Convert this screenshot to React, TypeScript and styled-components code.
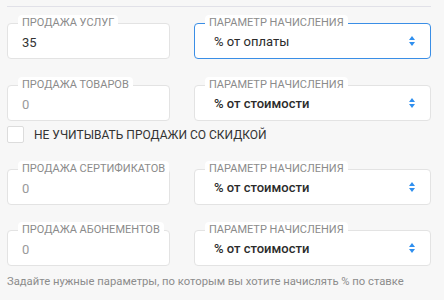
import React from "react";
import styled, { createGlobalStyle } from "styled-components";

const Global = createGlobalStyle`
  html, body { margin: 0; padding: 0; background: #f7f7f7; }
  body { font-family: Roboto, "Noto Sans", Arial, sans-serif; }
  * { box-sizing: border-box; }
`;

const Page = styled.div`
  width: 444px;
  height: 300px;
  padding: 6px 13px 0 7px;
  background: #f7f7f7;
`;

const Divider = styled.div`
  height: 1px;
  background: #e1e1e8;
`;

const Row = styled.div<{ $mt: number }>`
  display: grid;
  grid-template-columns: 163px 237px;
  column-gap: 24px;
  margin-top: ${(p) => p.$mt}px;
`;

const Field = styled.div<{ $focused?: boolean }>`
  position: relative;
  height: 36px;
  background: #fff;
  border: 1px solid ${(p) => (p.$focused ? "#3a8ee6" : "#e3e3e3")};
  border-radius: 4px;
  display: flex;
  align-items: center;
`;

const Label = styled.span`
  position: absolute;
  left: 10px;
  top: -9px;
  padding: 1px 4px 1px;
  background: #fff;
  border-radius: 4px;
  font-size: 11px;
  line-height: 14px;
  color: #8b8b8b;
  white-space: nowrap;
`;

const Value = styled.span<{ $muted?: boolean }>`
  padding-left: 14px;
  padding-top: 2px;
  font-size: 13px;
  color: ${(p) => (p.$muted ? "#9a9a9a" : "#333")};
`;

const SelectValue = styled.span<{ $bold?: boolean }>`
  flex: 1;
  padding-left: 19px;
  padding-top: 1px;
  font-size: 13px;
  font-weight: ${(p) => (p.$bold ? 500 : 400)};
  color: #2b2b2b;
`;

const Arrows = styled.svg`
  margin-right: 15px;
  flex: none;
`;

const CheckRow = styled.label`
  display: flex;
  align-items: center;
  gap: 10px;
  margin-top: 5px;
  font-size: 12px;
  color: #333;
`;

const Box = styled.span`
  width: 17px;
  height: 17px;
  background: #fff;
  border: 1px solid #dcdcdc;
  border-radius: 2px;
  flex: none;
`;

const Hint = styled.div`
  margin-top: 8px;
  font-size: 11.25px;
  line-height: 15px;
  color: #8c8c8c;
`;

const SortIcon = () => (
  <Arrows width="6" height="10" viewBox="0 0 6 10">
    <path d="M3 0 L6 4 H0 Z M3 10 L0 6 H6 Z" fill="#2f8fef" />
  </Arrows>
);

const rows = [
  { label: "ПРОДАЖА УСЛУГ", value: "35", muted: false, sel: "% от оплаты", focused: true, mt: 16 },
  { label: "ПРОДАЖА ТОВАРОВ", value: "0", muted: true, sel: "% от стоимости", focused: false, mt: 26 },
  { label: "ПРОДАЖА СЕРТИФИКАТОВ", value: "0", muted: true, sel: "% от стоимости", focused: false, mt: 26 },
  { label: "ПРОДАЖА АБОНЕМЕНТОВ", value: "0", muted: true, sel: "% от стоимости", focused: false, mt: 25 },
];

const FieldRow = ({ r }: { r: (typeof rows)[number] }) => (
  <Row $mt={r.mt}>
    <Field>
      <Label>{r.label}</Label>
      <Value $muted={r.muted}>{r.value}</Value>
    </Field>
    <Field $focused={r.focused}>
      <Label>ПАРАМЕТР НАЧИСЛЕНИЯ</Label>
      <SelectValue $bold={!r.focused}>{r.sel}</SelectValue>
      <SortIcon />
    </Field>
  </Row>
);

export default function App() {
  return (
    <Page>
      <Global />
      <Divider />
      <FieldRow r={rows[0]} />
      <FieldRow r={rows[1]} />
      <CheckRow>
        <Box />
        НЕ УЧИТЫВАТЬ ПРОДАЖИ СО СКИДКОЙ
      </CheckRow>
      <FieldRow r={rows[2]} />
      <FieldRow r={rows[3]} />
      <Hint>Задайте нужные параметры, по которым вы хотите начислять % по ставке</Hint>
    </Page>
  );
}
